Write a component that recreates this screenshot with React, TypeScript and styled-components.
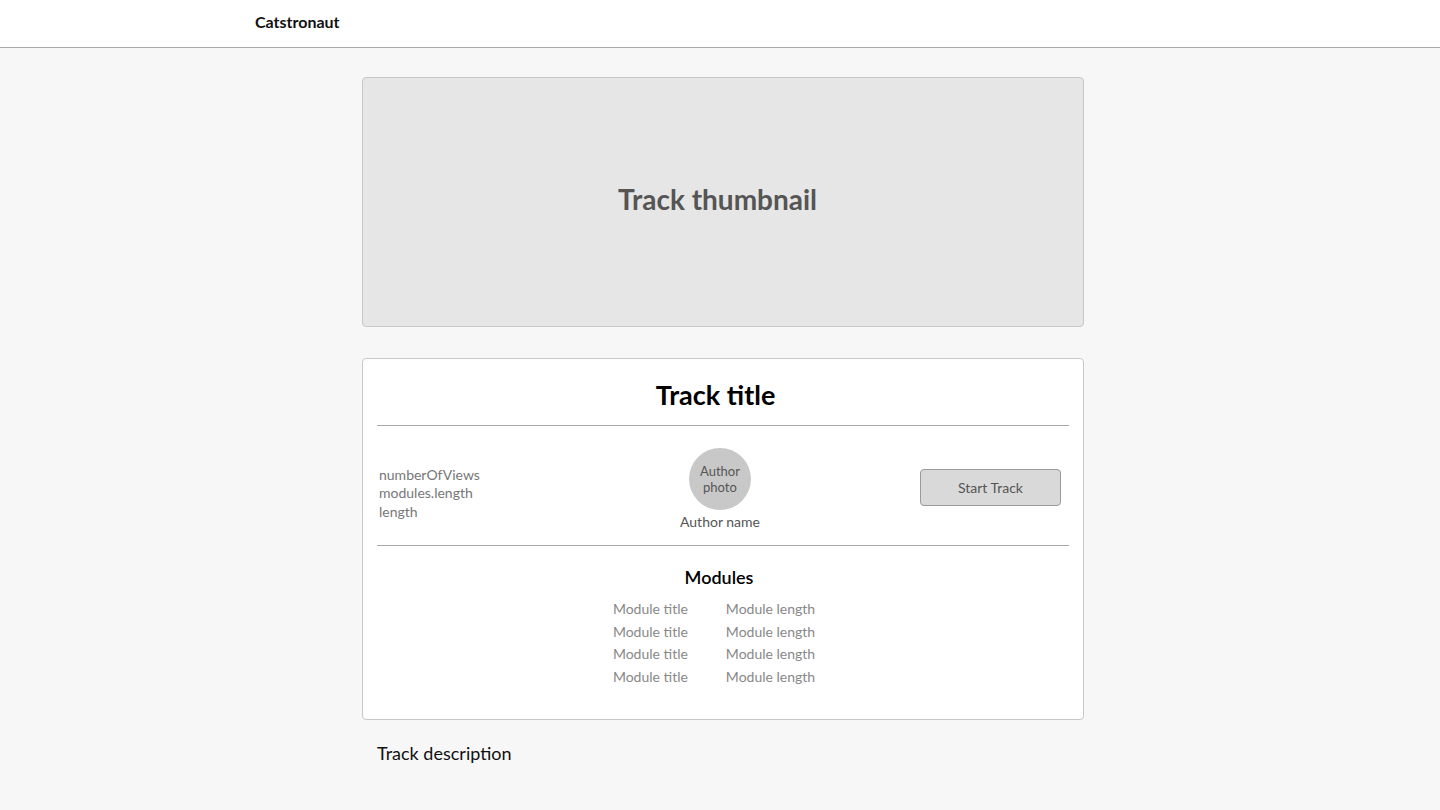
import React from "react";
import styled, { createGlobalStyle } from "styled-components";

const GlobalStyle = createGlobalStyle`
  body {
    margin: 0;
    background: #f7f7f7;
    font-family: Lato, "Noto Sans", sans-serif;
  }
`;

const modules = [
  { title: "Module title", length: "Module length" },
  { title: "Module title", length: "Module length" },
  { title: "Module title", length: "Module length" },
  { title: "Module title", length: "Module length" },
];

const App = () => {
  return (
    <>
      <GlobalStyle />
      <Header>
        <Logo>Catstronaut</Logo>
      </Header>
      <Main>
        <Thumbnail>Track thumbnail</Thumbnail>
        <Card>
          <Title>Track title</Title>
          <Divider />
          <DetailRow>
            <Stats>
              <span>numberOfViews</span>
              <span>modules.length</span>
              <span>length</span>
            </Stats>
            <Author>
              <AuthorPhoto>
                Author
                <br />
                photo
              </AuthorPhoto>
              <AuthorName>Author name</AuthorName>
            </Author>
            <ButtonCell>
              <StartButton>Start Track</StartButton>
            </ButtonCell>
          </DetailRow>
          <Divider />
          <ModulesTitle>Modules</ModulesTitle>
          <ModuleList>
            {modules.map((m, i) => (
              <React.Fragment key={i}>
                <span>{m.title}</span>
                <span>{m.length}</span>
              </React.Fragment>
            ))}
          </ModuleList>
        </Card>
        <Description>Track description</Description>
      </Main>
    </>
  );
};

const Header = styled.header`
  height: 47px;
  background: #fff;
  border-bottom: 1px solid #a8a8a8;
  display: flex;
  align-items: center;
  padding-left: 255px;
`;

const Logo = styled.div`
  font-size: 16px;
  font-weight: 700;
  color: #111;
  margin-top: -4px;
`;

const Main = styled.main`
  width: 722px;
  margin: 29px 0 0 362px;
  display: flex;
  flex-direction: column;
`;

const Thumbnail = styled.div`
  height: 242px;
  background: #e6e6e6;
  border: 1px solid #c8c8c8;
  border-radius: 4px;
  display: flex;
  align-items: center;
  justify-content: center;
  font-size: 28px;
  font-weight: 700;
  color: #555;
  padding: 0 11px 6px 0;
  box-sizing: content-box;
`;

const Card = styled.section`
  margin-top: 31px;
  background: #fff;
  border: 1px solid #c8c8c8;
  border-radius: 4px;
  padding: 0 14px 30px;
  height: 330px;
`;

const Title = styled.h1`
  margin: 0;
  padding: 19px 15px 0 0;
  height: 47px;
  text-align: center;
  font-size: 27px;
  font-weight: 700;
  color: #000;
`;

const Divider = styled.hr`
  margin: 0;
  border: 0;
  border-top: 1px solid #a8a8a8;
`;

const DetailRow = styled.div`
  display: grid;
  grid-template-columns: 1fr auto 1fr;
  align-items: center;
  height: 119px;
`;

const Stats = styled.div`
  display: flex;
  flex-direction: column;
  padding-left: 2px;
  font-size: 14px;
  line-height: 18.5px;
  color: #777;
  margin-top: 16px;
`;

const Author = styled.div`
  display: flex;
  flex-direction: column;
  align-items: center;
  margin-top: 6px;
  padding-right: 6px;
`;

const AuthorPhoto = styled.div`
  width: 62px;
  height: 62px;
  border-radius: 50%;
  background: #c8c8c8;
  color: #555;
  font-size: 13px;
  line-height: 16px;
  text-align: center;
  display: flex;
  align-items: center;
  justify-content: center;
`;

const AuthorName = styled.div`
  margin-top: 3px;
  font-size: 14px;
  color: #555;
`;

const ButtonCell = styled.div`
  display: flex;
  justify-content: flex-end;
  padding-right: 8px;
  margin-top: 4px;
`;

const StartButton = styled.button`
  width: 141px;
  height: 37px;
  background: #d9d9d9;
  border: 1px solid #9a9a9a;
  border-radius: 4px;
  font-family: inherit;
  font-size: 14px;
  color: #555;
`;

const ModulesTitle = styled.h2`
  margin: 20px 0 10px;
  padding-right: 8px;
  text-align: center;
  font-size: 18px;
  font-weight: 600;
  color: #000;
`;

const ModuleList = styled.div`
  display: grid;
  grid-template-columns: auto auto;
  justify-content: center;
  column-gap: 38px;
  font-size: 14px;
  line-height: 22.5px;
  color: #888;
  margin-right: 18px;
`;

const Description = styled.p`
  margin: 22px 0 0 15px;
  font-size: 18px;
  color: #111;
`;

export default App;
